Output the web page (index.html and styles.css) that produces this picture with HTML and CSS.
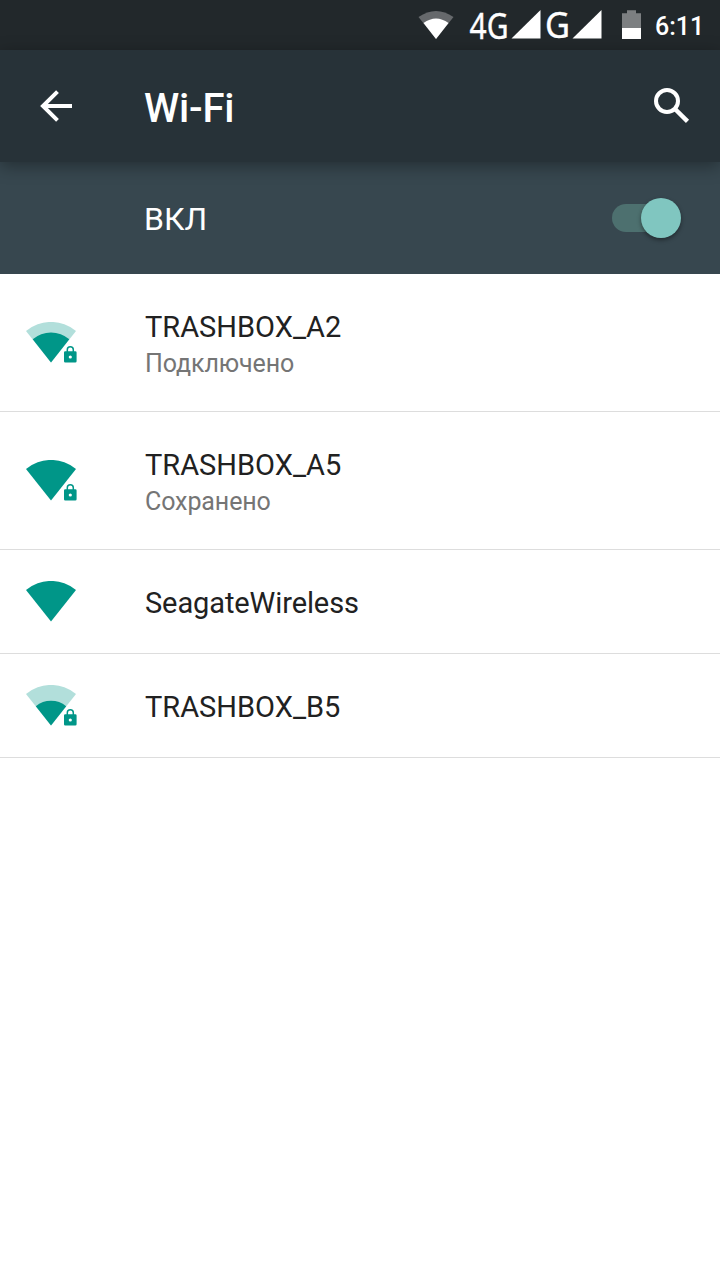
FILE: index.html
```html
<!DOCTYPE html>
<html lang="ru">
<head>
<meta charset="utf-8">
<title>Wi-Fi</title>
<link rel="stylesheet" href="styles.css">
</head>
<body>
<div class="screen">
  <div class="status">
    <svg class="status-icons" width="230" height="50" viewBox="415 0 230 50">
      <path fill="#66696c" d="M436 39L418.500 17Q436 5 453.500 17Z"/>
      <path fill="#fff" d="M436 39L423.500 23Q436 14 448.500 23Z"/>
      <text class="net" x="469.500" y="38.500" textLength="39" lengthAdjust="spacingAndGlyphs">4G</text>
      <path fill="#fff" d="M511.500 38.500L540.500 10V38.500Z"/>
      <text class="net" x="545" y="38" textLength="25" lengthAdjust="spacingAndGlyphs">G</text>
      <path fill="#fff" d="M572.500 38.500L601.500 10V38.500Z"/>
      <path fill="#7c7f81" d="M622 13.300H627V10.300H636V13.300H641V28H622Z"/>
      <path fill="#fff" d="M622 28H641V39H622Z"/>
    </svg>
    <span class="clock">6:11</span>
  </div>
  <header class="toolbar">
    <svg class="back" width="34" height="34" viewBox="0 0 34 34" fill="none" stroke="#fff" stroke-width="4"><path d="M33 17H5M18.500 2.700L4 17L18.500 31.300"/></svg>
    <h1 class="title">Wi-Fi</h1>
    <svg class="search" width="36" height="36" viewBox="0 0 36 36" fill="none" stroke="#fff"><circle cx="13" cy="13" r="11" stroke-width="4"/><path stroke-width="4.500" d="M20.500 20.500L33.500 33.300"/></svg>
  </header>
  <div class="switchbar">
    <span class="state">ВКЛ</span>
    <div class="switch"><div class="thumb"></div></div>
  </div>
  <ul class="list">
    <li class="row tall">
      <svg class="wifi" width="52" height="42" viewBox="0 0 52 42">
        <path fill="#b2dfdb" d="M25 40.500L0 9A39 39 0 0 1 50 9Z"/>
        <path fill="#009688" d="M25 40.500L6.700 17.300A28 28 0 0 1 43.300 17.300Z"/>
        <path fill="#009688" fill-rule="evenodd" d="M39.200 29.300H49.300Q50.600 29.300 50.600 30.600V39.200Q50.600 40.500 49.300 40.500H39.200Q38 40.500 38 39.200V30.600Q38 29.300 39.200 29.300ZM44.300 33.400A1.600 1.600 0 1 0 44.300 36.600A1.600 1.600 0 1 0 44.300 33.400Z"/>
        <path fill="none" stroke="#009688" stroke-width="1.500" d="M41.300 30V27.800A3 3 0 0 1 47.300 27.800V30"/>
      </svg>
      <div class="text"><div class="name">TRASHBOX_A2</div><div class="sub">Подключено</div></div>
    </li>
    <li class="row tall">
      <svg class="wifi" width="52" height="42" viewBox="0 0 52 42">
        <path fill="#009688" d="M25 40.500L0 9A39 39 0 0 1 50 9Z"/>
        <path fill="#009688" fill-rule="evenodd" d="M39.200 29.300H49.300Q50.600 29.300 50.600 30.600V39.200Q50.600 40.500 49.300 40.500H39.200Q38 40.500 38 39.200V30.600Q38 29.300 39.200 29.300ZM44.300 33.400A1.600 1.600 0 1 0 44.300 36.600A1.600 1.600 0 1 0 44.300 33.400Z"/>
        <path fill="none" stroke="#009688" stroke-width="1.500" d="M41.300 30V27.800A3 3 0 0 1 47.300 27.800V30"/>
      </svg>
      <div class="text"><div class="name">TRASHBOX_A5</div><div class="sub">Сохранено</div></div>
    </li>
    <li class="row">
      <svg class="wifi" width="52" height="42" viewBox="0 0 52 42">
        <path fill="#009688" d="M25 40.500L0 9A39 39 0 0 1 50 9Z"/>
      </svg>
      <div class="text"><div class="name mixed">SeagateWireless</div></div>
    </li>
    <li class="row">
      <svg class="wifi" width="52" height="42" viewBox="0 0 52 42">
        <path fill="#b2dfdb" d="M25 40.500L0 9A39 39 0 0 1 50 9Z"/>
        <path fill="#009688" d="M25 40.500L9.800 21.300A24 24 0 0 1 40.200 21.300Z"/>
        <path fill="#009688" fill-rule="evenodd" d="M39.200 29.300H49.300Q50.600 29.300 50.600 30.600V39.200Q50.600 40.500 49.300 40.500H39.200Q38 40.500 38 39.200V30.600Q38 29.300 39.200 29.300ZM44.300 33.400A1.600 1.600 0 1 0 44.300 36.600A1.600 1.600 0 1 0 44.300 33.400Z"/>
        <path fill="none" stroke="#009688" stroke-width="1.500" d="M41.300 30V27.800A3 3 0 0 1 47.300 27.800V30"/>
      </svg>
      <div class="text"><div class="name">TRASHBOX_B5</div></div>
    </li>
  </ul>
</div>
</body>
</html>
```
FILE: styles.css
```css
* { box-sizing: border-box; }
body { margin: 0; background: #fff; font-family: Roboto, sans-serif; }
.screen { width: 720px; height: 1280px; overflow: hidden; }
.status {
  height: 50px;
  padding-left: 415px;
  display: flex;
  background: #22282b;
  color: #fff;
}
.status-icons { flex: none; }
.net { font-family: "Noto Sans", sans-serif; font-size: 36px; fill: #fff; stroke: #fff; stroke-width: .4px; }
.clock { margin-left: 10px; padding-top: 2px; font-size: 25px; font-weight: 500; line-height: 50px; }
.toolbar {
  position: relative;
  height: 112px;
  padding: 0 30px 0 39px;
  display: flex;
  align-items: center;
  background: #273238;
  box-shadow: 0 4px 16px rgba(0, 0, 0, .35);
}
.title { margin: 6px 0 0 71px; font-size: 40px; font-weight: 500; line-height: 48px; letter-spacing: -.2px; color: #fff; }
.search { margin-left: auto; }
.switchbar {
  height: 112px;
  padding: 0 40px 0 144px;
  display: flex;
  align-items: center;
  justify-content: space-between;
  background: #37474f;
}
.state { margin-top: 2px; font-size: 32px; line-height: 40px; color: #fff; }
.switch {
  width: 68px;
  height: 28px;
  border-radius: 14px;
  background: #4d706f;
  display: flex;
  align-items: center;
  justify-content: flex-end;
}
.thumb {
  width: 40px;
  height: 40px;
  flex: none;
  margin-right: -1px;
  border-radius: 50%;
  background: #80c6c0;
  box-shadow: 0 2px 4px rgba(0, 0, 0, .4);
}
.list { margin: 0; padding: 0; list-style: none; }
.row {
  height: 104px;
  padding-left: 26px;
  display: flex;
  align-items: center;
  border-bottom: 1px solid #ddd;
}
.tall { height: 138px; }
.wifi { flex: none; }
.text { margin: 2px 0 0 67px; }
.tall .text { margin-top: 4px; }
.name { font-size: 29px; line-height: 38px; color: #212121; }
.mixed { letter-spacing: -.1px; }
.sub { font-size: 25px; line-height: 36px; letter-spacing: -.1px; color: #757575; }
```
